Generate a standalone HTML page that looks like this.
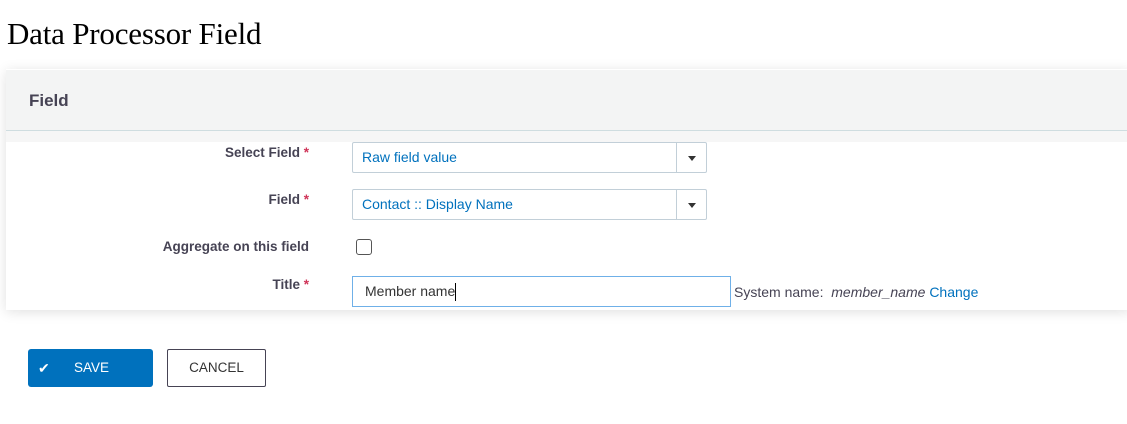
<!DOCTYPE html>
<html><head><style>
body{margin:0;width:1127px;height:424px;background:#fff;position:relative;font-family:"Liberation Sans",sans-serif;overflow:hidden}
.a{position:absolute}
h1{position:absolute;left:7px;top:16px;margin:0;font:31px "Liberation Serif",serif;color:#000;letter-spacing:-0.2px}
.panel{left:6px;top:69px;width:1125px;height:241px;background:#fff;box-shadow:0 2px 12px rgba(0,0,0,.12)}
.hdr{left:6px;top:70px;width:1125px;height:60px;background:#f3f4f4;border-bottom:1px solid #cfdde0}
.gap{left:6px;top:131px;width:1125px;height:11px;background:#f6f6f6}
.lbl{font-size:13.5px;font-weight:bold;color:#464354;text-align:right;width:300px;left:9px}
.lbl b{color:#cf3458}
.sel{left:352px;width:355px;height:31px;border:1px solid #c2cfd8;border-radius:2px;box-sizing:border-box;color:#0071bd;font-size:14px;line-height:29px;padding-left:9px}
.sel:after{content:"";position:absolute;right:29px;top:0;bottom:0;border-left:1px solid #c2cfd8}
.sel i{position:absolute;right:10px;top:13px;border-left:4px solid transparent;border-right:4px solid transparent;border-top:5px solid #333}
</style></head><body>
<h1>Data Processor Field</h1>
<div class="a panel"></div>
<div class="a hdr"></div>
<div class="a gap"></div>
<div class="a" style="left:29px;top:91px;font-size:17px;font-weight:bold;color:#464354">Field</div>
<div class="a lbl" style="top:145px">Select Field <b>*</b></div>
<div class="a sel" style="top:142px">Raw field value<i></i></div>
<div class="a lbl" style="top:192px">Field <b>*</b></div>
<div class="a sel" style="top:189px">Contact :: Display Name<i></i></div>
<div class="a lbl" style="top:239px">Aggregate on this field</div>
<div class="a" style="left:356px;top:239px;width:14px;height:14px;border:1px solid #555;border-radius:3px"></div>
<div class="a lbl" style="top:277px">Title <b>*</b></div>
<div class="a" style="left:352px;top:276px;width:379px;height:31px;border:1px solid #6fb0e8;box-sizing:border-box;font-size:14px;color:#333;line-height:29px;padding-left:12px">Member name<span style="display:inline-block;width:1px;height:18px;background:#000;vertical-align:middle"></span></div>
<div class="a" style="left:734px;top:284px;font-size:14px;color:#464354">System name:&nbsp; <i>member_name</i> <span style="color:#0071bd">Change</span></div>
<div class="a" style="left:28px;top:349px;width:125px;height:38px;background:#0071bd;border-radius:3px;color:#fff;font-size:13.5px;line-height:38px"><span style="position:absolute;left:10px;font-size:14px">✔</span><span style="position:absolute;left:46px">SAVE</span></div>
<div class="a" style="left:167px;top:349px;width:99px;height:38px;border:1px solid #464354;box-sizing:border-box;border-radius:2px;color:#333;font-size:13.5px;line-height:36px;text-align:center">CANCEL</div>
</body></html>
